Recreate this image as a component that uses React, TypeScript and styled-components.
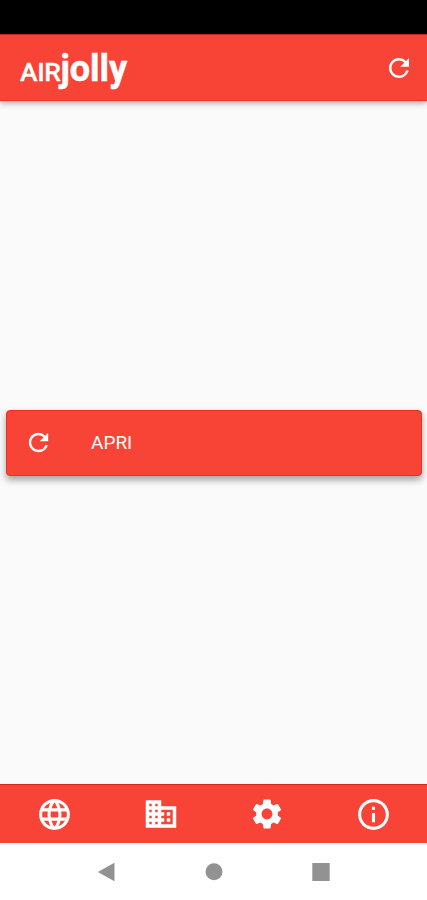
import React from "react";
import styled, { createGlobalStyle } from "styled-components";
import { MdRefresh, MdLanguage, MdSettings, MdInfoOutline, MdDomain } from "react-icons/md";

const GlobalStyle = createGlobalStyle`
  * { box-sizing: border-box; }
  body { margin: 0; background: #fafafa; font-family: Roboto, sans-serif; }
`;

const Screen = styled.div`
  display: flex;
  flex-direction: column;
  width: 100%;
  height: 900px;
  overflow: hidden;
  background: #fafafa;
`;

const StatusBar = styled.div`
  flex: 0 0 34px;
  background: #000;
`;

const AppBar = styled.header`
  display: flex;
  flex: 0 0 67px;
  align-items: center;
  justify-content: space-between;
  padding: 0 13px 0 20px;
  border-top: 1px solid #b92a1e;
  border-bottom: 1px solid #ee3426;
  color: #fff;
  background: #f74436;
  box-shadow: 0 2px 6px rgba(0, 0, 0, 0.34);
`;

const Title = styled.h1`
  display: flex;
  align-items: baseline;
  margin: 0;
  padding-top: 5px;
  font-size: 36px;
  line-height: 40px;
  font-weight: 700;
  letter-spacing: -0.1px;
  -webkit-text-stroke: 0.5px #fff;
`;

const TitlePrefix = styled.span`
  font-size: 26.5px;
  font-weight: 500;
  letter-spacing: -0.4px;
  -webkit-text-stroke: 0.3px #fff;
`;

const IconButton = styled.button`
  display: flex;
  padding: 0;
  border: 0;
  color: inherit;
  background: none;
`;

const BuildingIcon = styled(MdDomain)`
  stroke: currentColor;
  stroke-width: 0.35px;

  path[fill="none"] {
    stroke: none;
  }
`;

const Content = styled.main`
  display: flex;
  flex: 1;
  align-items: center;
  padding: 0 5px 0 6px;
`;

const OpenButton = styled.button`
  display: flex;
  align-items: center;
  gap: 38px;
  width: 100%;
  height: 66px;
  padding: 0 17px;
  border: 1px solid #ed2f20;
  border-radius: 4px;
  color: #fff;
  background: #f74436;
  box-shadow: 0 4px 7px rgba(0, 0, 0, 0.36);
  font: 400 19px Roboto, sans-serif;
`;

const TabBar = styled.nav`
  display: grid;
  grid-template-columns: repeat(4, 1fr);
  flex: 0 0 59px;
  place-items: center;
  padding-left: 1px;
  border-top: 1px solid #dc2417;
  color: #fff;
  background: #f74436;
`;

const SystemBar = styled.footer`
  display: flex;
  flex: 0 0 57px;
  align-items: center;
  justify-content: space-around;
  padding: 1px 53px 0;
  background: #fff;
`;

const SystemIcon = styled.svg`
  width: 20px;
  height: 20px;
  fill: #929292;
`;

export default function App() {
  return (
    <Screen>
      <GlobalStyle />
      <StatusBar />
      <AppBar>
        <Title><TitlePrefix>AIR</TitlePrefix>jolly</Title>
        <IconButton aria-label="Refresh"><MdRefresh size={30} /></IconButton>
      </AppBar>
      <Content>
        <OpenButton><MdRefresh size={29} />APRI</OpenButton>
      </Content>
      <TabBar>
        <IconButton aria-label="Web"><MdLanguage size={37} /></IconButton>
        <IconButton aria-label="Company"><BuildingIcon size={36} /></IconButton>
        <IconButton aria-label="Settings"><MdSettings size={36} /></IconButton>
        <IconButton aria-label="Information"><MdInfoOutline size={37} /></IconButton>
      </TabBar>
      <SystemBar>
        <SystemIcon viewBox="0 0 20 20"><path d="M.8 10 17.5.8v18.4z" /></SystemIcon>
        <SystemIcon viewBox="0 0 20 20"><circle cx="10" cy="9.7" r="8.5" /></SystemIcon>
        <SystemIcon viewBox="0 0 20 20"><path d="M1.3 1h17.4v18H1.3z" /></SystemIcon>
      </SystemBar>
    </Screen>
  );
}
